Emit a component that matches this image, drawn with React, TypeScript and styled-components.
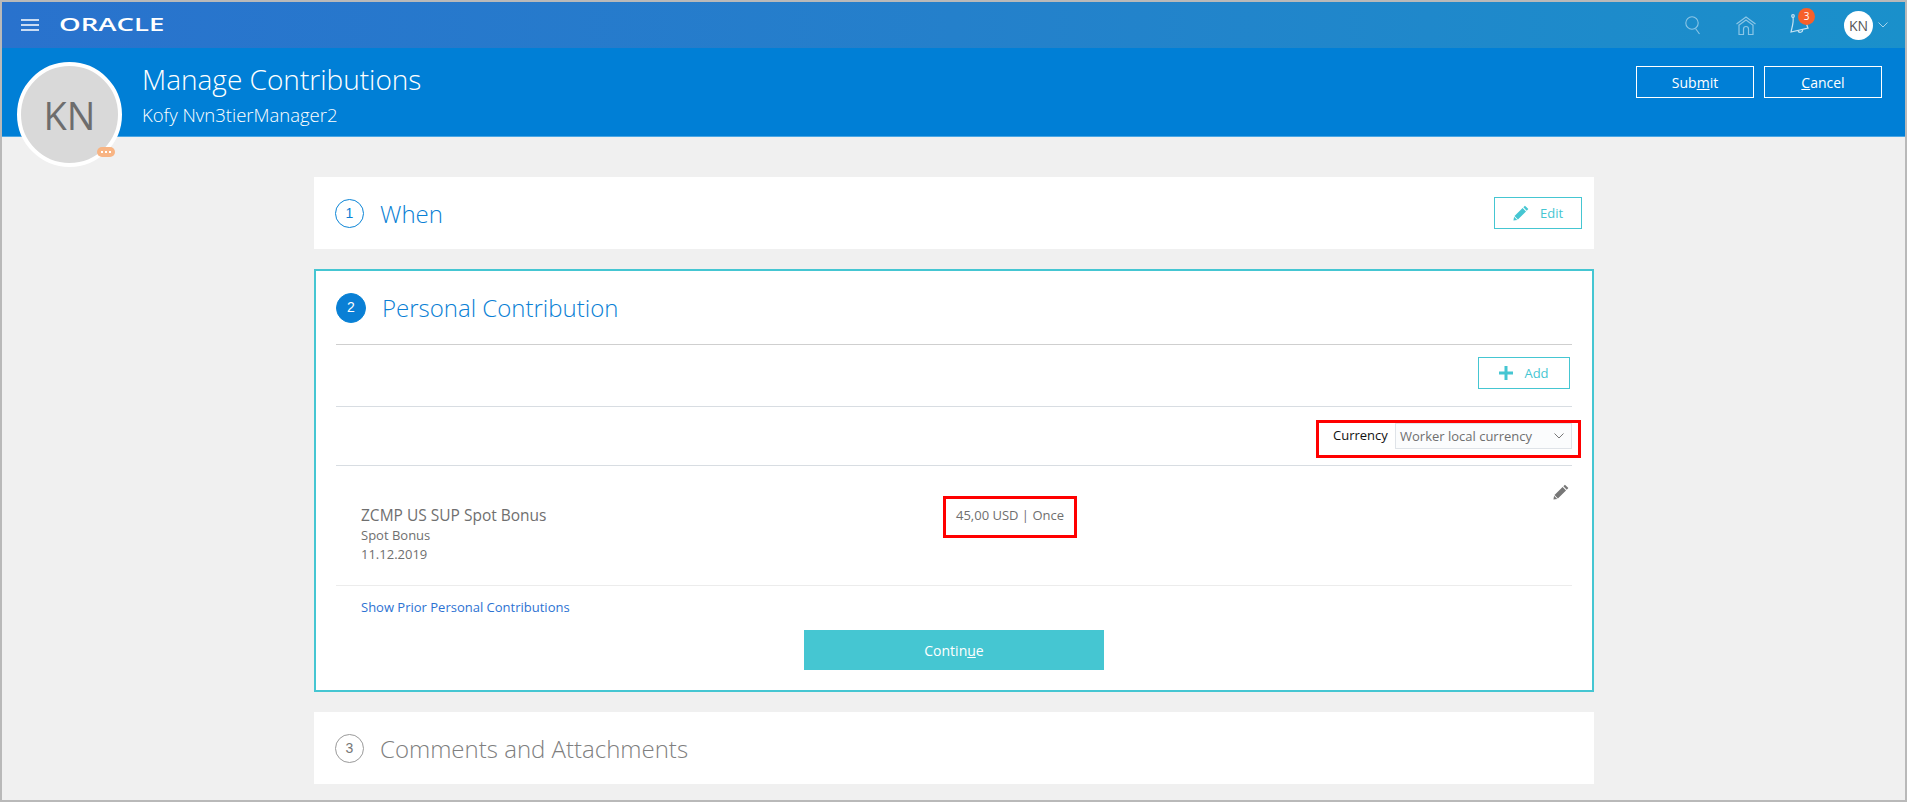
import styled, { createGlobalStyle } from "styled-components";

const GlobalStyle = createGlobalStyle`
    html, body {
        margin: 0;
        padding: 0;
        background: #f0f0f0;
    }
    * {
        box-sizing: border-box;
    }
    body {
        font-family: "Open Sans", "Noto Sans", sans-serif;
    }
`;

const Page = styled.div`
    width: 1907px;
    height: 802px;
    border: 2px solid #b9b9b9;
    background: #f0f0f0;
    overflow: hidden;
    position: relative;
`;

const NavBar = styled.div`
    height: 46px;
    display: flex;
    align-items: center;
    padding: 0 17px 0 19px;
    background: linear-gradient(90deg, #2972cd 0%, #2480cb 50%, #1a90cb 100%);
`;

const Logo = styled.span`
    margin: 0 0 3px 20px;
    width: 103px;
    font-weight: 600;
    font-size: 18px;
    line-height: 16px;
    color: #fff;
    transform: scaleX(1.53);
    transform-origin: left center;
`;

const NavIcons = styled.div`
    margin-left: auto;
    display: flex;
    align-items: center;
`;

const NavIcon = styled.div<{ $gap: number }>`
    position: relative;
    display: flex;
    margin-right: ${(p) => p.$gap}px;
`;

const CountBadge = styled.span`
    position: absolute;
    top: -6px;
    left: 9px;
    width: 17px;
    height: 17px;
    border-radius: 50%;
    background: #f6602a;
    color: #fff;
    font-size: 10px;
    line-height: 17px;
    text-align: center;
`;

const UserCircle = styled.span`
    width: 29px;
    height: 29px;
    border-radius: 50%;
    background: #fff;
    color: #555;
    font-size: 14px;
    line-height: 29px;
    text-align: center;
`;

const UserChevron = styled.span`
    display: flex;
    margin-left: 5px;
`;

const Header = styled.div`
    height: 89px;
    display: flex;
    justify-content: space-between;
    padding: 0 23px 0 140px;
    background: #007fd6;
    border-bottom: 1px solid #4aa6e4;
    color: #fff;
`;

const Avatar = styled.div`
    position: absolute;
    top: 60px;
    left: 15px;
    width: 105px;
    height: 105px;
    border-radius: 50%;
    border: 4px solid #fff;
    background: #d9d9d9;
    color: #6d6d6d;
    font-size: 38px;
    line-height: 99px;
    text-align: center;
`;

const AvatarBadge = styled.span`
    position: absolute;
    right: 3px;
    bottom: 6px;
    width: 18px;
    height: 10px;
    display: flex;
    align-items: center;
    justify-content: center;
    gap: 2px;
    border-radius: 5px;
    background: #f8b483;
`;

const BadgeDot = styled.i`
    width: 2px;
    height: 2px;
    background: #fff;
`;

const HeaderText = styled.div`
    padding-top: 13px;
`;

const PageTitle = styled.div`
    font-size: 28px;
    font-weight: 300;
    line-height: 37px;
`;

const PageSubtitle = styled.div`
    margin-top: 4px;
    font-size: 18.5px;
    font-weight: 300;
    line-height: 26px;
`;

const HeaderButtons = styled.div`
    display: flex;
    gap: 10px;
    padding-top: 18px;
`;

const HeaderButton = styled.button`
    width: 118px;
    height: 32px;
    padding: 0;
    border: 1px solid #fff;
    background: transparent;
    color: #fff;
    font-family: inherit;
    font-size: 14px;
`;

const Main = styled.div`
    width: 1280px;
    margin: 40px 0 0 312px;
    display: flex;
    flex-direction: column;
    gap: 20px;
`;

const CollapsedCard = styled.div`
    height: 72px;
    display: flex;
    align-items: center;
    padding: 0 12px 0 21px;
    background: #fff;
`;

const ActiveCard = styled.div`
    height: 423px;
    padding: 0 20px;
    background: #fff;
    border: 2px solid #45c6d2;
`;

const StepCircle = styled.span<{ $state: "done" | "active" | "todo" }>`
    flex: none;
    width: ${(p) => (p.$state === "active" ? 30 : 29)}px;
    height: ${(p) => (p.$state === "active" ? 30 : 29)}px;
    border-radius: 50%;
    border: 1px solid ${(p) => (p.$state === "todo" ? "#9a9a9a" : "#0a84d6")};
    background: ${(p) => (p.$state === "active" ? "#0a7fd5" : "#fff")};
    color: ${(p) => (p.$state === "active" ? "#fff" : p.$state === "todo" ? "#777" : "#0a7fd5")};
    font-family: "Liberation Sans", sans-serif;
    font-size: 14px;
    line-height: 27px;
    text-align: center;
`;

const StepTitle = styled.div<{ $muted?: boolean }>`
    margin-left: 16px;
    font-size: 24px;
    font-weight: 300;
    color: ${(p) => (p.$muted ? "#7f7f7f" : "#0a7fd5")};
`;

const StepHeader = styled.div`
    height: 74px;
    display: flex;
    align-items: center;
    border-bottom: 1px solid #cfcfcf;
`;

const OutlineButton = styled.button<{ $width: number }>`
    width: ${(p) => p.$width}px;
    height: 32px;
    margin-left: auto;
    padding: 0;
    display: flex;
    align-items: center;
    justify-content: center;
    gap: 11px;
    border: 1px solid #45c6d2;
    background: #fff;
    color: #45c6d2;
    font-family: inherit;
    font-size: 13px;
`;

const AddRow = styled.div`
    height: 62px;
    display: flex;
    align-items: center;
    padding: 0 2px 5px 0;
    border-bottom: 1px solid #d8dde2;
`;

const CurrencyRow = styled.div`
    height: 59px;
    display: flex;
    justify-content: flex-end;
    padding-top: 13px;
    border-bottom: 1px solid #d8dde2;
`;

const RedBox = styled.div`
    border: 3px solid #f00;
`;

const CurrencyBox = styled(RedBox)`
    width: 265px;
    height: 38px;
    margin-right: -9px;
    display: flex;
    align-items: flex-start;
    justify-content: space-between;
    padding: 0 6px 0 14px;
`;

const CurrencyLabel = styled.span`
    font-size: 13px;
    line-height: 25px;
    color: #111;
`;

const Select = styled.div`
    width: 177px;
    height: 26px;
    display: flex;
    align-items: center;
    justify-content: space-between;
    padding: 0 7px 1px 4px;
    border: 1px solid #dfe3e8;
    background: #fbfcfd;
    color: #6f6f6f;
    font-size: 13px;
`;

const ContributionRow = styled.div`
    height: 120px;
    display: grid;
    grid-template-columns: 582px 134px 1fr auto;
    padding: 30px 3px 0 25px;
    border-bottom: 1px solid #ececec;
    color: #6f6f6f;
`;

const PlanName = styled.div`
    font-size: 15.5px;
    line-height: 22px;
    margin-top: 8px;
`;

const PlanLine = styled.div`
    font-size: 13px;
    line-height: 19px;
`;

const ValueBox = styled(RedBox)`
    height: 42px;
    font-size: 13px;
    line-height: 32px;
    text-align: center;
`;

const RowAction = styled.div`
    margin-top: -13px;
`;

const LinkRow = styled.div`
    height: 44px;
    display: flex;
    align-items: center;
    padding: 0 0 2px 25px;
    color: #2d72d2;
    font-size: 13px;
`;

const ContinueButton = styled.button`
    display: block;
    width: 300px;
    height: 40px;
    margin: 0 auto;
    border: none;
    background: #45c6d2;
    color: #fff;
    font-family: inherit;
    font-size: 14px;
`;

const Pencil = ({ color, size }: { color: string; size: number }) => (
    <svg width={size} height={size} viewBox="0 1 15 15" fill={color}>
        <path d="M11.2 1.6l3.2 3.2-1.5 1.5-3.2-3.2zM9 3.8l3.2 3.2-7.6 7.6-3.2-3.2zM1 12l3 3-3.6.6z" />
    </svg>
);

const Chevron = ({ color, width }: { color: string; width: number }) => (
    <svg width={width} height={width * 0.6} viewBox="0 0 10 6" fill="none" stroke={color} strokeWidth="1">
        <path d="M.5.5L5 5 9.5.5" />
    </svg>
);

export default function App() {
    return (
        <Page>
            <GlobalStyle />
            <NavBar>
                <svg width="18" height="12" viewBox="0 0 18 12" stroke="#fff" strokeWidth="1.4">
                    <path d="M0 1h18M0 6h18M0 11h18" />
                </svg>
                <Logo>ORACLE</Logo>
                <NavIcons>
                    <NavIcon $gap={34}>
                        <svg width="17" height="19" viewBox="0 0 17 19" fill="none" stroke="#8cc6e6" strokeWidth="1.1">
                            <circle cx="7" cy="7" r="6.2" />
                            <path d="M10.5 12.5L14.5 18" />
                        </svg>
                    </NavIcon>
                    <NavIcon $gap={33}>
                        <svg width="20" height="19" viewBox="0 0 20 19" fill="none" stroke="#8cc6e6" strokeWidth="1.2">
                            <path d="M.5 8L10 1l9.500 7M2.500 9.500L10 4l7.500 5.500M3 9v9.500h4.500v-5.500a2.500 2.500 0 0 1 5 0v5.500H17V9" />
                        </svg>
                    </NavIcon>
                    <NavIcon $gap={33}>
                        <svg width="22" height="22" viewBox="0 0 22 22" fill="none" stroke="#c4e3f3" strokeWidth="1.2">
                            <path d="M4 3c1 5-1 10-2 15l17-4c-1-2-1.500-4-2-6" />
                            <circle cx="4" cy="2" r="1.300" />
                            <path d="M9 16.500a2.300 2.300 0 0 0 4.500-1" />
                        </svg>
                        <CountBadge>3</CountBadge>
                    </NavIcon>
                    <UserCircle>KN</UserCircle>
                    <UserChevron>
                        <Chevron color="#a6d4ec" width={10} />
                    </UserChevron>
                </NavIcons>
            </NavBar>
            <Header>
                <HeaderText>
                    <PageTitle>Manage Contributions</PageTitle>
                    <PageSubtitle>Kofy Nvn3tierManager2</PageSubtitle>
                </HeaderText>
                <HeaderButtons>
                    <HeaderButton>Sub<u>m</u>it</HeaderButton>
                    <HeaderButton><u>C</u>ancel</HeaderButton>
                </HeaderButtons>
            </Header>
            <Avatar>
                KN
                <AvatarBadge>
                    <BadgeDot />
                    <BadgeDot />
                    <BadgeDot />
                </AvatarBadge>
            </Avatar>
            <Main>
                <CollapsedCard>
                    <StepCircle $state="done">1</StepCircle>
                    <StepTitle>When</StepTitle>
                    <OutlineButton $width={88}>
                        <Pencil color="#45c6d2" size={16} />
                        Edit
                    </OutlineButton>
                </CollapsedCard>
                <ActiveCard>
                    <StepHeader>
                        <StepCircle $state="active">2</StepCircle>
                        <StepTitle>Personal Contribution</StepTitle>
                    </StepHeader>
                    <AddRow>
                        <OutlineButton $width={92}>
                            <svg width="14" height="14" viewBox="0 0 14 14" fill="#45c6d2">
                                <path d="M5.500 0h3v5.500H14v3H8.500V14h-3V8.500H0v-3h5.500z" />
                            </svg>
                            Add
                        </OutlineButton>
                    </AddRow>
                    <CurrencyRow>
                        <CurrencyBox>
                            <CurrencyLabel>Currency</CurrencyLabel>
                            <Select>
                                Worker local currency
                                <Chevron color="#777" width={10} />
                            </Select>
                        </CurrencyBox>
                    </CurrencyRow>
                    <ContributionRow>
                        <div>
                            <PlanName>ZCMP US SUP Spot Bonus</PlanName>
                            <PlanLine>Spot Bonus</PlanLine>
                            <PlanLine>11.12.2019</PlanLine>
                        </div>
                        <ValueBox>45,00 USD | Once</ValueBox>
                        <div />
                        <RowAction>
                            <Pencil color="#777" size={16} />
                        </RowAction>
                    </ContributionRow>
                    <LinkRow>Show Prior Personal Contributions</LinkRow>
                    <ContinueButton>Contin<u>u</u>e</ContinueButton>
                </ActiveCard>
                <CollapsedCard>
                    <StepCircle $state="todo">3</StepCircle>
                    <StepTitle $muted>Comments and Attachments</StepTitle>
                </CollapsedCard>
            </Main>
        </Page>
    );
}
